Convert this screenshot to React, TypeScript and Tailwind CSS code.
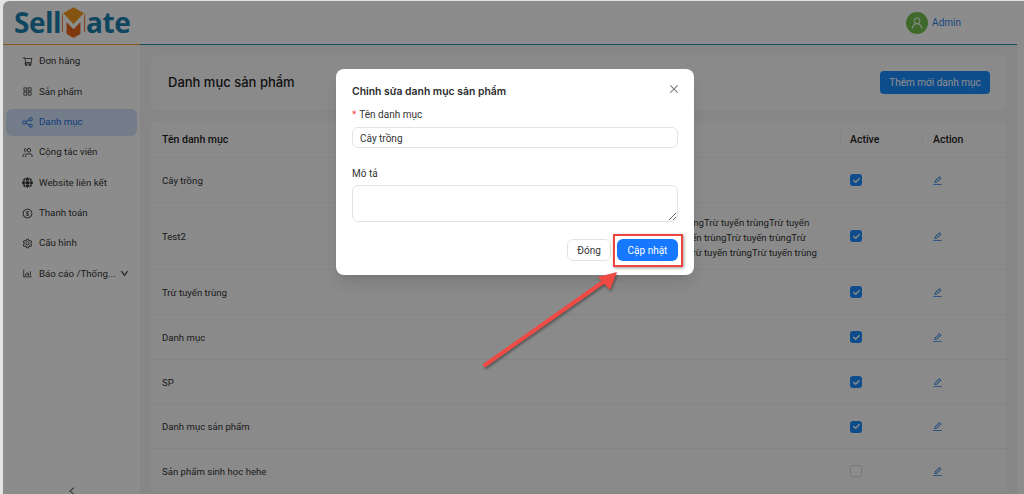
import {
  AiOutlineAppstore,
  AiOutlineBarChart,
  AiOutlineClose,
  AiOutlineDollarCircle,
  AiOutlineDown,
  AiOutlineEdit,
  AiOutlineLeft,
  AiOutlineSetting,
  AiOutlineShoppingCart,
  AiOutlineUser,
} from "react-icons/ai";
import { FaCheck, FaGlobe } from "react-icons/fa";
import { Users } from "lucide-react";

function ShareIcon({ className }: { className?: string }) {
  return (
    <svg viewBox="0 0 12 12" fill="none" stroke="currentColor" strokeWidth="1" className={className}>
      <circle cx="2.5" cy="6" r="1.8" />
      <rect x="8" y="1" width="3" height="3" rx="0.6" />
      <rect x="8" y="8" width="3" height="3" rx="0.6" />
      <path d="M4.2 5.2L8 3M4.2 6.8L8 9" />
    </svg>
  );
}

function TeamIcon({ className }: { className?: string }) {
  return <Users strokeWidth={2} className={`${className} scale-x-[-1]`} />;
}

const menu = [
  { label: "Đơn hàng", icon: AiOutlineShoppingCart },
  { label: "Sản phẩm", icon: AiOutlineAppstore },
  { label: "Danh mục", icon: ShareIcon, active: true },
  { label: "Cộng tác viên", icon: TeamIcon },
  { label: "Website liên kết", icon: FaGlobe },
  { label: "Thanh toán", icon: AiOutlineDollarCircle },
  { label: "Cấu hình", icon: AiOutlineSetting },
  { label: "Báo cáo /Thống...", icon: AiOutlineBarChart, caret: true },
];

const descLines = [
  "Trừ tuyến trùngTrừ tuyến trùngTrừ tuyến",
  "trùngTrừ tuyến trùngTrừ tuyến trùngTrừ",
  "tuyến trùngTrừ tuyến trùngTrừ tuyến trùng",
];

const rows = [
  { name: "Cây trồng", h: "h-[45px]", active: true },
  { name: "Test2", h: "h-[67px]", desc: descLines, active: true },
  { name: "Trừ tuyến trùng", h: "h-[45px]", active: true },
  { name: "Danh mục", h: "h-[45px]", active: true },
  { name: "SP", h: "h-[45px]", active: true },
  { name: "Danh mục sản phẩm", h: "h-[44px]", active: true },
  { name: "Sản phẩm sinh học hehe", h: "h-[45px]", active: false },
];

function Logo() {
  return (
    <div className="flex items-center text-[28px] leading-none font-bold text-[#1c80ae] tracking-[-0.5px] font-['Open_Sans',sans-serif]">
      <span>Sell</span>
      <svg width="25" height="31" viewBox="0 0 27 33" className="mt-[1px]">
        <polygon points="13.5,0 26,7 26,26 13.5,33 1,26 1,7" fill="#f39a1e" />
        <polygon points="13.5,20 26,10 26,26 13.5,33 1,26 1,10" fill="#e8641b" />
        <path d="M4 30V11L13.5 21L23 11V30" fill="none" stroke="#ffffff" strokeWidth="4" />
      </svg>
      <span>ate</span>
    </div>
  );
}

function Sidebar() {
  return (
    <aside className="w-[137px] shrink-0 bg-white pt-[3px] relative font-['Roboto',sans-serif]">
      <div className="flex flex-col gap-[3.35px] px-[3px]">
        {menu.map((item) => (
          <div
            key={item.label}
            className={`h-[27px] flex items-center pl-[16px] rounded-md text-[9.7px] ${
              item.active ? "bg-[#cfe3fa] text-[#1b6ce0]" : "text-[#333333]"
            }`}
          >
            <item.icon className="w-[11px] h-[11px] shrink-0" />
            <span className="ml-[6px] whitespace-nowrap">{item.label}</span>
            {item.caret && <AiOutlineDown className="w-[9px] h-[9px] ml-[4px] stroke-[60]" />}
          </div>
        ))}
      </div>
      <div className="absolute left-[64px] top-[441px] text-[#333333]">
        <AiOutlineLeft className="w-[10px] h-[10px]" />
      </div>
    </aside>
  );
}

function Table() {
  return (
    <div className="bg-[#fbfbfb] rounded-t-md text-[9.6px] text-[#333333] font-['Roboto',sans-serif]">
      <div className="h-[37px] flex items-center text-[10.5px] font-medium text-[#1f1f1f] border-b border-[#f0f0f0]">
        <div className="w-[426px] pl-[11px] pt-[2px]">Tên danh mục</div>
        <div className="w-[263px]"></div>
        <div className="w-[82px] pl-[9px] pt-[2px] border-l border-[#f0f0f0]">Active</div>
        <div className="w-[85px] pl-[10px] pt-[2px] border-l border-[#f0f0f0]">Action</div>
      </div>
      {rows.map((row) => (
        <div key={row.name} className={`${row.h} flex items-center border-b border-[#f0f0f0]`}>
          <div className="w-[426px] pl-[11px] pt-[2px]">{row.name}</div>
          <div className="w-[263px] pl-[62px] pt-[2px] leading-[15px] whitespace-nowrap">
            {row.desc?.map((line) => <div key={line}>{line}</div>)}
          </div>
          <div className="w-[82px] pl-[10px]">
            {row.active ? (
              <div className="w-[12px] h-[12px] rounded-[3px] bg-[#1a8cff] flex items-center justify-center">
                <FaCheck className="w-[7px] h-[7px] text-white" />
              </div>
            ) : (
              <div className="w-[12px] h-[12px] rounded-[3px] border border-[#d9d9d9] bg-white"></div>
            )}
          </div>
          <div className="w-[85px] pl-[10px] text-[#2a7fe0]">
            <AiOutlineEdit className="w-[11px] h-[11px]" />
          </div>
        </div>
      ))}
    </div>
  );
}

function Modal() {
  return (
    <div className="absolute left-[333px] top-[68px] w-[358px] h-[206px] bg-white rounded-lg shadow-lg p-[16px] pt-[15px] text-[#333333] font-['Roboto',sans-serif]">
      <div className="flex items-center justify-between h-[16px]">
        <h2 className="text-[10.4px] font-semibold text-[#2c2c2c] font-['Inter',sans-serif]">Chỉnh sửa danh mục sản phẩm</h2>
        <AiOutlineClose className="w-[12px] h-[12px] text-[#777777] mr-[-2px] mt-[-6px]" />
      </div>
      <label className="block mt-[7px] h-[16px] text-[10px] leading-[16px]">
        <span className="text-[#ff4d4f] mr-[3px]">*</span>Tên danh mục
      </label>
      <input
        defaultValue="Cây trồng"
        className="block mt-[4px] w-full h-[21px] border border-[#e3e3e3] rounded-md px-[7px] pt-[1px] text-[10px] outline-none"
      />
      <label className="block mt-[18px] h-[16px] text-[10px] leading-[16px]">Mô tả</label>
      <textarea className="block mt-[3px] w-full h-[37px] border border-[#e3e3e3] rounded-md px-[7px] text-[10px] outline-none" />
      <div className="flex justify-end gap-[6px] mt-[17px]">
        <button className="w-[44px] h-[22px] border border-[#e3e3e3] rounded-md text-[10px] bg-white">Đóng</button>
        <button className="w-[61px] h-[22px] rounded-md text-[10px] text-white bg-[#1677ff]">Cập nhật</button>
      </div>
    </div>
  );
}

function Annotation() {
  return (
    <>
      <div className="absolute left-[610px] top-[233px] w-[70px] h-[33px] border-2 border-[#f0443f] shadow-[1px_1px_3px_rgba(0,0,0,0.4)]"></div>
      <svg className="absolute left-[467px] top-[259px] w-[160px] h-[115px]" viewBox="0 0 160 115">
        <g style={{ filter: "drop-shadow(1px 2px 1px rgba(0,0,0,0.35))" }}>
          <path d="M15 105L136 20" stroke="#f04a45" strokeWidth="4" strokeLinecap="round" fill="none" />
          <polygon points="147,12 128,17 140,30" fill="#f04a45" />
        </g>
      </svg>
    </>
  );
}

export default function App() {
  return (
    <div className="w-[1024px] h-[494px] overflow-hidden bg-[#e4e4e4] pl-[3px] pt-[1px] font-['Inter',sans-serif]">
      <div className="relative w-[1021px] h-[493px] overflow-hidden rounded-tl-md bg-white">
        <div className="w-[1014px]">
          <header className="h-[44px] flex items-center bg-white border-b border-[#2a8ab8]">
            <div className="w-[137px] h-[44px] shrink-0 border-b border-[#f0a030] pl-[11px] flex items-center">
              <Logo />
            </div>
            <div className="ml-auto flex items-center pr-[56px]">
              <div className="w-[22px] h-[22px] rounded-full bg-[#73c04d] flex items-center justify-center">
                <AiOutlineUser className="w-[14px] h-[14px] text-white" />
              </div>
              <span className="ml-[4px] text-[10px] text-[#2f7fe8] font-['Roboto',sans-serif]">Admin</span>
            </div>
          </header>
          <div className="flex h-[449px]">
            <Sidebar />
            <main className="flex-1 bg-[#f5f5f5] pl-[11px] pr-[10px] pt-[10px] overflow-hidden">
              <div className="h-[55px] bg-[#fbfbfb] rounded-md flex items-center justify-between pl-[17px] pr-[17px]">
                <h1 className="text-[13px] font-medium text-[#222222]">Danh mục sản phẩm</h1>
                <button className="w-[110px] h-[23px] rounded bg-[#1a8cff] text-white text-[10px] font-['Roboto',sans-serif]">
                  Thêm mới danh mục
                </button>
              </div>
              <div className="mt-[11px] w-[856px]">
                <Table />
              </div>
            </main>
          </div>
        </div>
        <div className="absolute inset-0 bg-black/45"></div>
        <Modal />
        <Annotation />
      </div>
    </div>
  );
}
